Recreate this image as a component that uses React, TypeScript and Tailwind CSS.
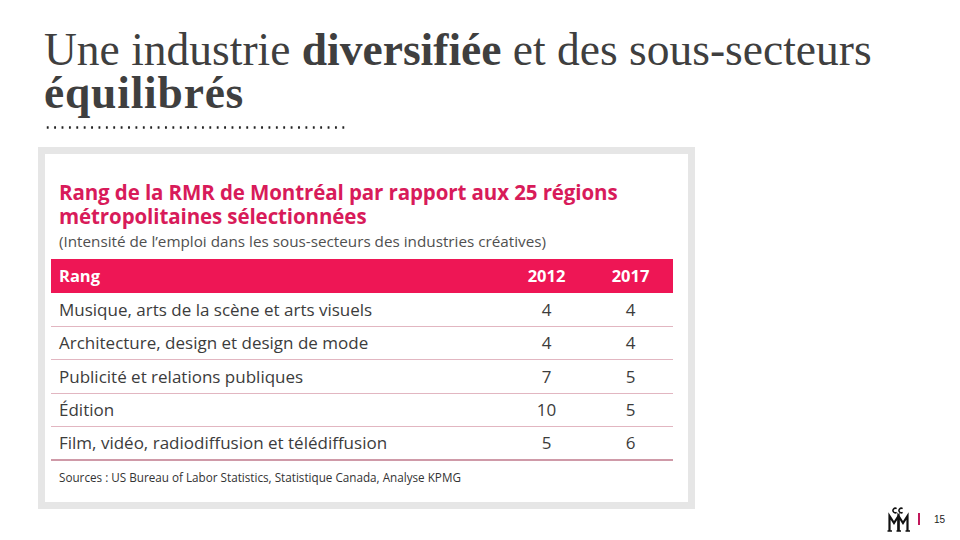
import React from "react";

const rows: [string, string, string][] = [
  ["Musique, arts de la scène et arts visuels", "4", "4"],
  ["Architecture, design et design de mode", "4", "4"],
  ["Publicité et relations publiques", "7", "5"],
  ["Édition", "10", "5"],
  ["Film, vidéo, radiodiffusion et télédiffusion", "5", "6"],
];

function Logo() {
  return (
    <svg width="24" height="26" viewBox="0 0 24 26" fill="none" stroke="#111" strokeWidth="2.2">
      <path d="M9.6 2.6 A2.3 2.3 0 1 0 9.6 6.4" strokeWidth="1.5" />
      <path d="M15.6 2.6 A2.3 2.3 0 1 0 15.6 6.4" strokeWidth="1.5" />
      <path d="M2.5 25 V10 L7 17 L11.5 10 V25" />
      <path d="M11.5 25 V10 L16 17 L20.5 10 V25" />
      <path d="M0.5 25 H5 M9.5 25 H14 M18.5 25 H23" strokeWidth="1.6" />
    </svg>
  );
}

export default function App() {
  return (
    <div className="w-[960px] h-[540px] bg-white relative overflow-hidden">
      <div className="pl-[44px] pt-[28px]">
        <h1
          className="text-[45.5px] leading-[43px] text-[#3f3f3f]"
          style={{ fontFamily: "'Liberation Serif', 'DejaVu Serif', serif" }}
        >
          Une industrie <b className="font-bold">diversifiée</b> et des sous-secteurs
          <br />
          <b className="font-bold tracking-[0.8px]">équilibrés</b>
        </h1>
        <div className="mt-[12px] w-[303px] h-[3px] bg-[radial-gradient(circle,#222_1px,transparent_1.4px)] bg-[length:7.4px_3px] bg-repeat-x" />
      </div>

      <div
        className="ml-[38px] mt-[18px] w-[657px] h-[362px] bg-[#e6e6e6] p-[7px]"
        style={{ fontFamily: "'Open Sans', 'Noto Sans', sans-serif" }}
      >
        <div className="w-full h-full bg-white pl-[6px] pr-[15px] pt-[26px]">
          <div className="pl-[8px] text-[#d81b5a] font-bold text-[20.5px] leading-[24px] tracking-[-0.1px]">
            Rang de la RMR de Montréal par rapport aux 25 régions
            <br />
            métropolitaines sélectionnées
          </div>
          <div className="pl-[8px] text-[#505050] text-[15.25px] leading-[20px] mt-[3px]">
            (Intensité de l’emploi dans les sous-secteurs des industries créatives)
          </div>
          <div className="mt-[8px] flex h-[34px] items-center bg-[#ee1655] text-white font-bold text-[16.5px]">
            <div className="flex-1 pl-[8px]">Rang</div>
            <div className="w-[83px] text-center">2012</div>
            <div className="w-[85px] text-center">2017</div>
          </div>
          {rows.map((r, i) => (
            <div
              key={i}
              className={
                "flex items-center h-[33.6px] text-[17px] text-[#3c3c3c] " +
                (i === rows.length - 1
                  ? "border-b-2 border-[#cf9aa8]"
                  : "border-b border-[#e2b6c1]")
              }
            >
              <div className="flex-1 pl-[8px]">{r[0]}</div>
              <div className="w-[83px] text-center">{r[1]}</div>
              <div className="w-[85px] text-center">{r[2]}</div>
            </div>
          ))}
          <div className="pl-[8px] mt-[8px] text-[11.7px] text-[#333]">
            Sources : US Bureau of Labor Statistics, Statistique Canada, Analyse KPMG
          </div>
        </div>
      </div>

      <div className="absolute left-[887px] top-[506px] flex items-center">
        <Logo />
        <div className="ml-[7px] w-[2px] h-[12px] bg-[#c2185b]" />
        <div
          className="ml-[14px] text-[10px] text-[#222]"
          style={{ fontFamily: "'Liberation Sans', Arial, sans-serif" }}
        >
          15
        </div>
      </div>
    </div>
  );
}
